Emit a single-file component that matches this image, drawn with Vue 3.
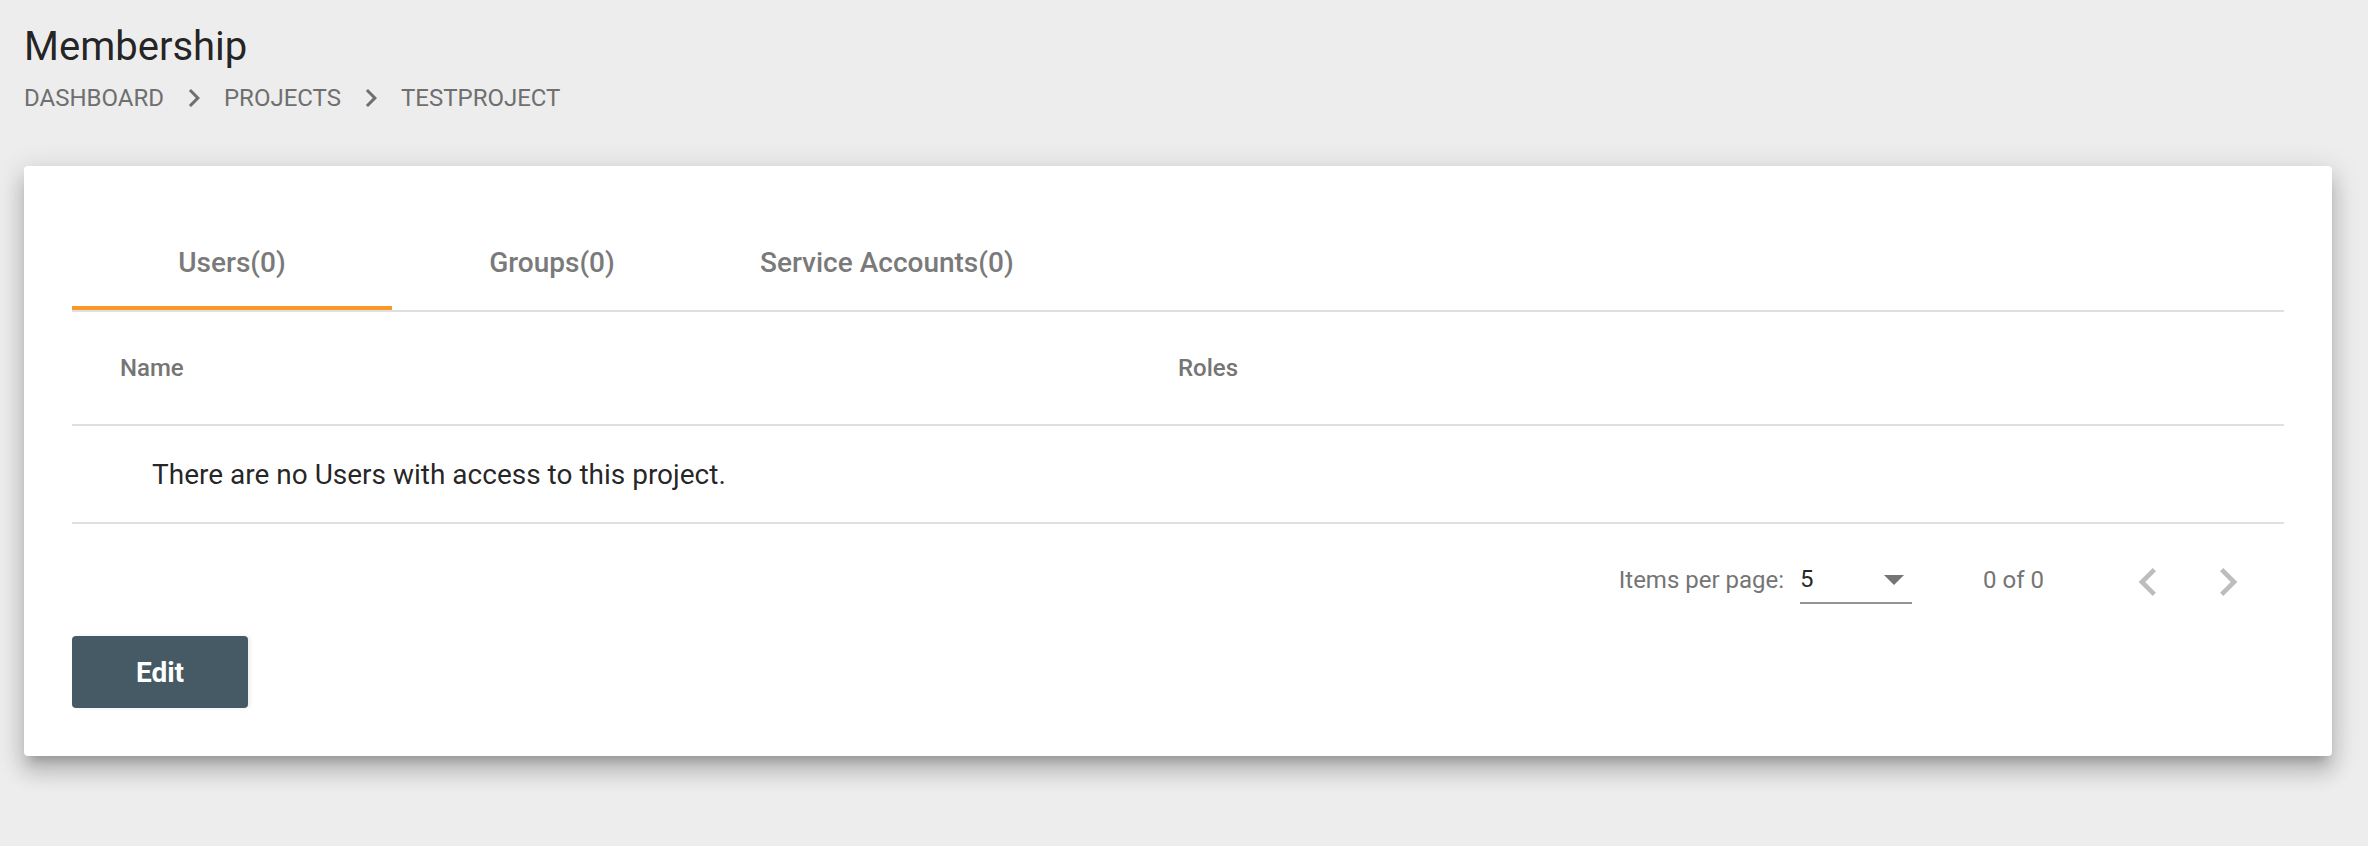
<script setup>
import { computed, ref } from 'vue'

const crumbs = ['DASHBOARD', 'PROJECTS', 'TESTPROJECT']
const tabs = [
  { name: 'Users', count: 0 },
  { name: 'Groups', count: 0 },
  { name: 'Service Accounts', count: 0 },
]
const active = ref(0)
const pageSize = ref(5)
const current = computed(() => tabs[active.value])
</script>

<template>
  <main class="page">
    <h1 class="title">Membership</h1>
    <nav class="crumbs" aria-label="Breadcrumb">
      <template v-for="(crumb, i) in crumbs" :key="crumb">
        <svg v-if="i > 0" class="crumb-icon" viewBox="0 0 24 24" aria-hidden="true">
          <path d="M10 6L8.59 7.41 13.17 12l-4.58 4.59L10 18l6-6z" />
        </svg>
        <a href="#" class="crumb">{{ crumb }}</a>
      </template>
    </nav>

    <section class="card">
      <div class="tabs" role="tablist">
        <button
          v-for="(tab, i) in tabs"
          :key="tab.name"
          type="button"
          role="tab"
          class="tab"
          :class="{ active: i === active }"
          :aria-selected="i === active"
          @click="active = i"
        >{{ tab.name }}({{ tab.count }})</button>
      </div>

      <table class="table">
        <thead>
          <tr>
            <th scope="col">Name</th>
            <th scope="col">Roles</th>
          </tr>
        </thead>
        <tbody>
          <tr>
            <td colspan="2">There are no {{ current.name }} with access to this project.</td>
          </tr>
        </tbody>
      </table>

      <div class="paginator">
        <label for="page-size">Items per page:</label>
        <div class="select-box">
          <select id="page-size" v-model="pageSize" class="select">
            <option :value="5">5</option>
            <option :value="10">10</option>
            <option :value="25">25</option>
          </select>
          <svg class="arrow" viewBox="0 0 20 10" aria-hidden="true"><path d="M0 0h20L10 10z" /></svg>
        </div>
        <span class="range">{{ current.count }} of {{ current.count }}</span>
        <button type="button" class="pager" aria-label="Previous page" disabled>
          <svg viewBox="0 0 24 24" aria-hidden="true">
            <path d="M15.41 7.41L14 6l-6 6 6 6 1.41-1.41L10.83 12z" />
          </svg>
        </button>
        <button type="button" class="pager" aria-label="Next page" disabled>
          <svg viewBox="0 0 24 24" aria-hidden="true">
            <path d="M10 6L8.59 7.41 13.17 12l-4.58 4.59L10 18l6-6z" />
          </svg>
        </button>
      </div>

      <button type="button" class="edit">Edit</button>
    </section>
  </main>
</template>

<style>
body {
  background: #ededed;
}
</style>

<style scoped>
.page {
  box-sizing: border-box;
  min-height: 100vh;
  padding: 23px 36px 48px 24px;
  font-family: Roboto, "Liberation Sans", sans-serif;
  color: rgba(0, 0, 0, 0.87);
}
.title {
  margin: 0;
  font-size: 40px;
  font-weight: 400;
  line-height: 48px;
}
.crumbs {
  display: flex;
  align-items: center;
  gap: 12px;
  height: 36px;
  margin: 9px 0 50px;
}
.crumb {
  font-size: 24px;
  line-height: 36px;
  color: #6f6f6f;
  text-decoration: none;
}
.crumb-icon {
  width: 36px;
  height: 36px;
  fill: #6f6f6f;
}
.card {
  padding: 48px;
  border-radius: 4px;
  background: #fff;
  box-shadow:
    0 10px 10px -6px rgba(0, 0, 0, 0.2),
    0 16px 20px 2px rgba(0, 0, 0, 0.14),
    0 6px 28px 4px rgba(0, 0, 0, 0.12);
}
button {
  border: 0;
  background: none;
  font-family: inherit;
  cursor: pointer;
}
.tabs {
  display: flex;
  border-bottom: 2px solid #e0e0e0;
}
.tab {
  min-width: 320px;
  height: 96px;
  padding: 4px 48px 0;
  border-bottom: 4px solid transparent;
  font-size: 28px;
  font-weight: 500;
  color: #7a7a7a;
}
.tab.active {
  border-bottom-color: #fb9728;
}
.table {
  width: 100%;
  padding: 0;
  table-layout: fixed;
  border-spacing: 0;
  text-align: left;
}
.table th,
.table td {
  box-sizing: border-box;
  border-bottom: 2px solid #e0e0e0;
}
.table th {
  height: 114px;
  padding: 0;
  font-size: 24px;
  font-weight: 500;
  color: #757575;
}
.table th:first-child {
  padding-left: 48px;
}
.table td {
  height: 98px;
  padding: 0 0 0 80px;
  font-size: 28px;
}
.paginator {
  display: flex;
  align-items: center;
  justify-content: flex-end;
  height: 112px;
  padding-right: 16px;
  font-size: 24px;
  color: #757575;
}
.select-box {
  display: grid;
  align-items: center;
  width: 112px;
  margin: 0 71px 0 16px;
}
.select,
.arrow {
  grid-area: 1 / 1;
}
.select {
  appearance: none;
  width: 100%;
  height: 48px;
  padding: 0;
  border: 0;
  border-bottom: 2px solid #949494;
  border-radius: 0;
  background: transparent;
  font-family: inherit;
  font-size: 24px;
  color: rgba(0, 0, 0, 0.87);
}
.arrow {
  justify-self: end;
  width: 20px;
  height: 10px;
  margin-right: 8px;
  fill: #757575;
  pointer-events: none;
}
.range {
  margin-right: 64px;
}
.pager {
  display: grid;
  place-items: center;
  width: 80px;
  height: 80px;
  padding: 4px 0 0;
}
.pager svg {
  width: 56px;
  height: 56px;
  fill: #bdbdbd;
}
.edit {
  display: block;
  min-width: 176px;
  height: 72px;
  padding: 0 32px;
  border-radius: 4px;
  background: #455a64;
  box-shadow: 2px 0 4px rgba(0, 0, 0, 0.08);
  font-size: 28px;
  font-weight: 700;
  color: #fff;
}
</style>
